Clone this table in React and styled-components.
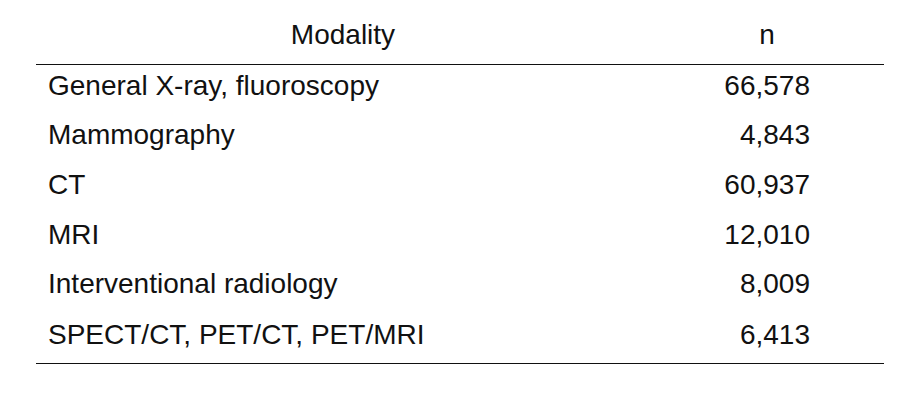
import React from "react";
import styled, { createGlobalStyle } from "styled-components";

const rows = [
  ["General X-ray, fluoroscopy", "66,578"],
  ["Mammography", "4,843"],
  ["CT", "60,937"],
  ["MRI", "12,010"],
  ["Interventional radiology", "8,009"],
  ["SPECT/CT, PET/CT, PET/MRI", "6,413"],
];

function App() {
  return (
    <>
      <GlobalStyle />
      <Page>
        <Table>
          <thead>
            <tr>
              <HeadCell>Modality</HeadCell>
              <HeadCell $narrow>n</HeadCell>
            </tr>
          </thead>
          <tbody>
            {rows.map(([name, n]) => (
              <tr key={name}>
                <NameCell>{name}</NameCell>
                <NumCell>{n}</NumCell>
              </tr>
            ))}
          </tbody>
        </Table>
      </Page>
    </>
  );
}

export default App;

const GlobalStyle = createGlobalStyle`
  body {
    margin: 0;
    background: #fff;
    font-family: "Liberation Sans", Arial, sans-serif;
    color: #111;
  }
`;

const Page = styled.div`
  width: 918px;
  height: 407px;
  padding-left: 36px;
  box-sizing: border-box;
`;

const Table = styled.table`
  border-collapse: collapse;
  width: 848px;
  font-size: 28px;
  line-height: 32px;
  border-bottom: 1.5px solid #111;

  thead tr {
    border-bottom: 1.5px solid #111;
  }

  tbody tr:last-child td {
    height: 52px;
  }
`;

const HeadCell = styled.th`
  font-weight: normal;
  text-align: center;
  height: 64px;
  padding: 7px 0 0;
  box-sizing: border-box;
  width: ${({ $narrow }) => ($narrow ? "234px" : "614px")};
`;

const NameCell = styled.td`
  height: 49.6px;
  padding: 0 0 6px 12px;
  box-sizing: border-box;
  text-align: left;
`;

const NumCell = styled.td`
  height: 49.6px;
  padding: 0 74px 6px 0;
  box-sizing: border-box;
  text-align: right;
`;
